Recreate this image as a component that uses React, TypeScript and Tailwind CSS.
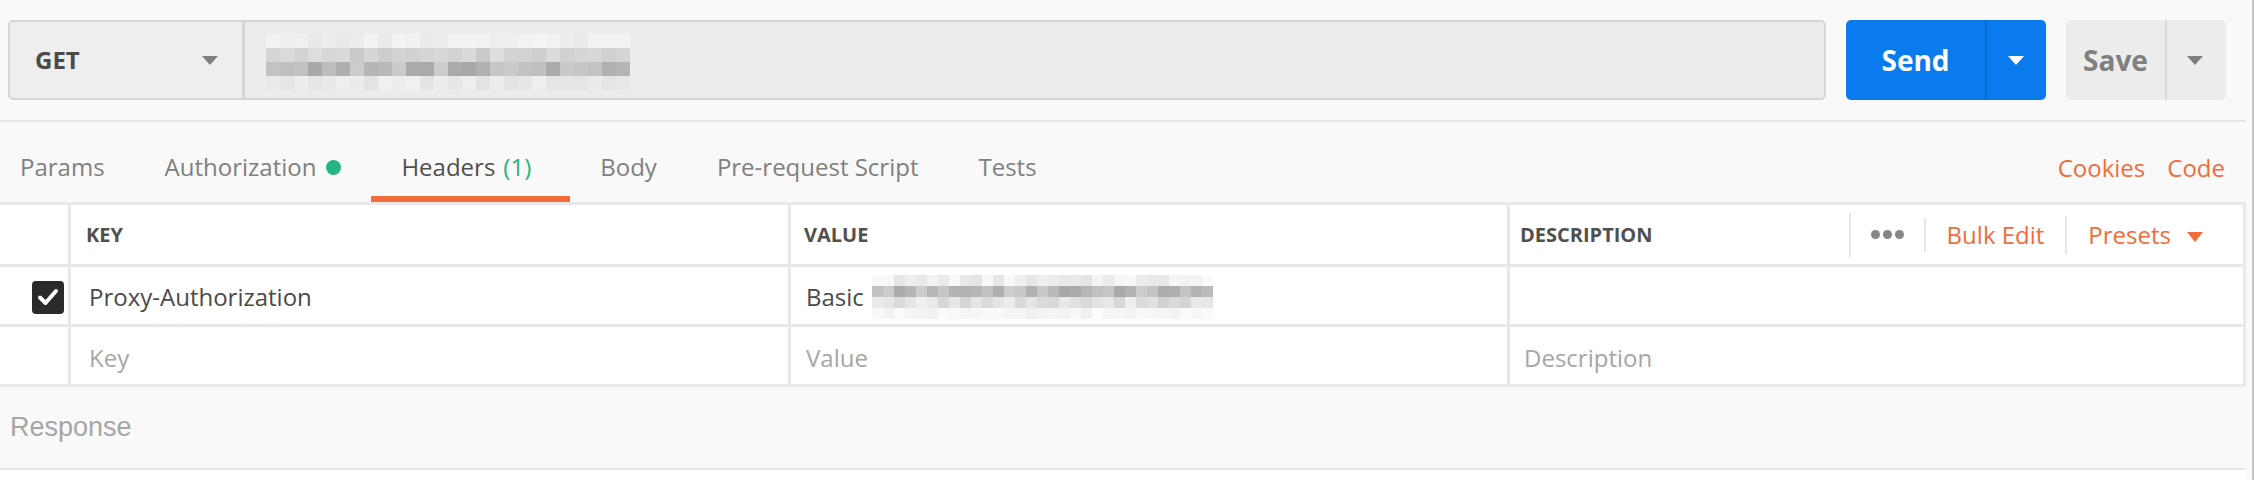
import React from "react";

type Band = [number, number];

function rand(i: number, seed: number) {
  const x = Math.sin(i * 12.9898 + seed * 78.233) * 43758.5453;
  return x - Math.floor(x);
}

// pixelated blur standing in for redacted text
function Mosaic({ cols, cell, bands, seed }: { cols: number; cell: number; bands: Band[]; seed: number }) {
  return (
    <div className="flex flex-col">
      {bands.map((band, r) => (
        <div key={r} className="flex">
          {Array.from({ length: cols }).map((_, c) => {
            const edge = c === 0 || c === cols - 1 ? 0.6 : 1;
            const t = rand(r * 97 + c, seed);
            const v = Math.round(band[1] - (band[1] - band[0]) * t * edge);
            return (
              <div
                key={c}
                style={{ width: cell, height: cell, backgroundColor: `rgb(${v},${v},${v})` }}
              />
            );
          })}
        </div>
      ))}
    </div>
  );
}

function Caret({ color, w = 16, h = 9 }: { color: string; w?: number; h?: number }) {
  return (
    <svg width={w} height={h} viewBox={`0 0 ${w} ${h}`}>
      <path d={`M0 0H${w}L${w / 2} ${h}Z`} fill={color} />
    </svg>
  );
}

function Tab({ label, active, extra, wide }: { label: string; active?: boolean; extra?: React.ReactNode; wide?: boolean }) {
  return (
    <div
      className={
        "h-full flex items-end pl-[30px] pb-[17px] border-b-[6px] " +
        (wide ? "pr-[39px] " : "pr-[30px] ") +
        (active ? "border-[#f26b3a] text-[#505050]" : "border-transparent text-[#808080]")
      }
    >
      <span className="text-[24px] leading-none whitespace-nowrap flex items-center">
        {label}
        {extra}
      </span>
    </div>
  );
}

export default function App() {
  return (
    <div className="flex w-[2254px] h-[480px] bg-white font-['Open_Sans',sans-serif] overflow-hidden">
      <div className="w-[2246px] flex flex-col">
        {/* request bar */}
        <div className="h-[122px] flex items-start pt-[20px] pl-[8px] bg-[#f9f9f9] border-b-2 border-[#e6e6e6]">
          <div className="w-[1818px] h-[80px] flex border-2 border-[#d6d6d6] rounded-[5px] bg-[#ececec]">
            <div className="w-[235px] flex items-center justify-between pl-[25px] pr-[24px] bg-[#eeeeee] border-r-[3px] border-[#d6d6d6] rounded-l-[4px]">
              <span className="text-[24px] font-bold text-[#4a4a4a]">GET</span>
              <Caret color="#7f7f7f" />
            </div>
            <div className="flex-1 flex items-center pl-[21px] pt-[4px]">
              <Mosaic
                cols={26}
                cell={14}
                seed={3}
                bands={[
                  [232, 244],
                  [200, 222],
                  [165, 205],
                  [226, 240],
                ]}
              />
            </div>
          </div>

          <div className="ml-[20px] w-[200px] h-[80px] flex rounded-[5px] bg-[#097bed] overflow-hidden">
            <div className="w-[139px] flex items-center justify-center text-white text-[28px] font-bold">Send</div>
            <div className="w-[2px] bg-[#0a6cd0]" />
            <div className="flex-1 flex items-center justify-center pr-[2px]">
              <Caret color="#ffffff" />
            </div>
          </div>

          <div className="ml-[20px] w-[160px] h-[80px] flex rounded-[5px] bg-[#ececec] overflow-hidden">
            <div className="w-[99px] flex items-center justify-center text-[#808080] text-[28px] font-bold">Save</div>
            <div className="w-[2px] bg-[#d9d9d9]" />
            <div className="flex-1 flex items-center justify-center pr-[4px]">
              <Caret color="#7f7f7f" />
            </div>
          </div>
        </div>

        {/* tabs */}
        <div className="h-[80px] flex items-end justify-between bg-[#f9f9f9]">
          <div className="h-full flex">
            <div className="h-full flex items-end pl-[20px] pr-[30px] pb-[17px] border-b-[6px] border-transparent text-[#808080]">
              <span className="text-[24px] leading-none">Params</span>
            </div>
            <Tab
              label="Authorization"
              extra={<span className="ml-[10px] w-[15px] h-[15px] rounded-full bg-[#26b47f]" />}
            />
            <Tab label="Headers" active wide extra={<span className="ml-[8px] text-[#26b47f]">(1)</span>} />
            <Tab label="Body" />
            <Tab label="Pre-request Script" />
            <Tab label="Tests" />
          </div>
          <div className="h-full flex items-end gap-[22px] pr-[21px] pb-[22px] text-[24px] leading-none text-[#f26b3a]">
            <span>Cookies</span>
            <span>Code</span>
          </div>
        </div>

        {/* headers table */}
        <div className="grid grid-cols-[71px_720px_719px_736px] border-t-[3px] border-[#e8e8e8] bg-white">
          {/* header row */}
          <div className="h-[62px] border-r-[3px] border-b-[3px] border-[#e8e8e8]" />
          <div className="h-[62px] flex items-center pl-[15px] border-r-[3px] border-b-[3px] border-[#e8e8e8] text-[20px] font-bold text-[#505050]">
            KEY
          </div>
          <div className="h-[62px] flex items-center pl-[13px] border-r-[3px] border-b-[3px] border-[#e8e8e8] text-[20px] font-bold text-[#505050]">
            VALUE
          </div>
          <div className="h-[62px] flex items-center pl-[10px] pr-[40px] border-r-[3px] border-b-[3px] border-[#e8e8e8]">
            <span className="text-[20px] font-bold text-[#505050]">DESCRIPTION</span>
            <div className="ml-auto flex items-center h-full">
              <div className="w-[2px] h-[44px] bg-[#e6e6e6]" />
              <div className="flex gap-[3px] mx-[20px]">
                <span className="w-[9px] h-[9px] rounded-full bg-[#858585]" />
                <span className="w-[9px] h-[9px] rounded-full bg-[#858585]" />
                <span className="w-[9px] h-[9px] rounded-full bg-[#858585]" />
              </div>
              <div className="w-[2px] h-[34px] bg-[#e6e6e6]" />
              <span className="mx-[21px] text-[24px] text-[#f26b3a]">Bulk Edit</span>
              <div className="w-[2px] h-[38px] bg-[#e6e6e6]" />
              <span className="ml-[21px] text-[24px] text-[#f26b3a]">Presets</span>
              <span className="ml-[16px] mt-[4px]">
                <Caret color="#f26b3a" w={16} h={10} />
              </span>
            </div>
          </div>

          {/* row 1 */}
          <div className="h-[60px] flex items-center pl-[32px] pt-[3px] border-r-[3px] border-b-[3px] border-[#e8e8e8]">
            <div className="w-[32px] h-[33px] rounded-[4px] bg-[#2a2a2a] flex items-center justify-center">
              <svg width="22" height="18" viewBox="0 0 22 18">
                <path d="M3 9.5L8.5 15L19 3" fill="none" stroke="#ffffff" strokeWidth="4" strokeLinecap="round" strokeLinejoin="round" />
              </svg>
            </div>
          </div>
          <div className="h-[60px] flex items-center pl-[18px] pt-[3px] border-r-[3px] border-b-[3px] border-[#e8e8e8] text-[24px] text-[#4a4a4a]">
            Proxy-Authorization
          </div>
          <div className="h-[60px] flex items-center pl-[15px] pt-[3px] border-r-[3px] border-b-[3px] border-[#e8e8e8] text-[24px] text-[#4a4a4a]">
            <span>Basic</span>
            <div className="ml-[8px]">
              <Mosaic
                cols={31}
                cell={11}
                seed={7}
                bands={[
                  [228, 250],
                  [168, 205],
                  [208, 240],
                  [240, 252],
                ]}
              />
            </div>
          </div>
          <div className="h-[60px] border-r-[3px] border-b-[3px] border-[#e8e8e8]" />

          {/* row 2 */}
          <div className="h-[60px] border-r-[3px] border-b-[3px] border-[#e8e8e8]" />
          <div className="h-[60px] flex items-center pl-[18px] pt-[4px] border-r-[3px] border-b-[3px] border-[#e8e8e8] text-[24px] text-[#a6a6a6]">
            Key
          </div>
          <div className="h-[60px] flex items-center pl-[15px] pt-[4px] border-r-[3px] border-b-[3px] border-[#e8e8e8] text-[24px] text-[#a6a6a6]">
            Value
          </div>
          <div className="h-[60px] flex items-center pl-[14px] pt-[4px] border-r-[3px] border-b-[3px] border-[#e8e8e8] text-[24px] text-[#a6a6a6]">
            Description
          </div>
        </div>

        {/* response */}
        <div className="h-[83px] flex items-center pl-[10px] bg-[#f9f9f9] border-b-2 border-[#e8e8e8]">
          <span className="font-['Liberation_Sans',Arial,sans-serif] text-[27px] text-[#a6a6a6]">Response</span>
        </div>
      </div>
      <div className="w-[6px] bg-[#f9f9f9]" />
      <div className="w-[2px] bg-[#c6c6c6]" />
    </div>
  );
}
